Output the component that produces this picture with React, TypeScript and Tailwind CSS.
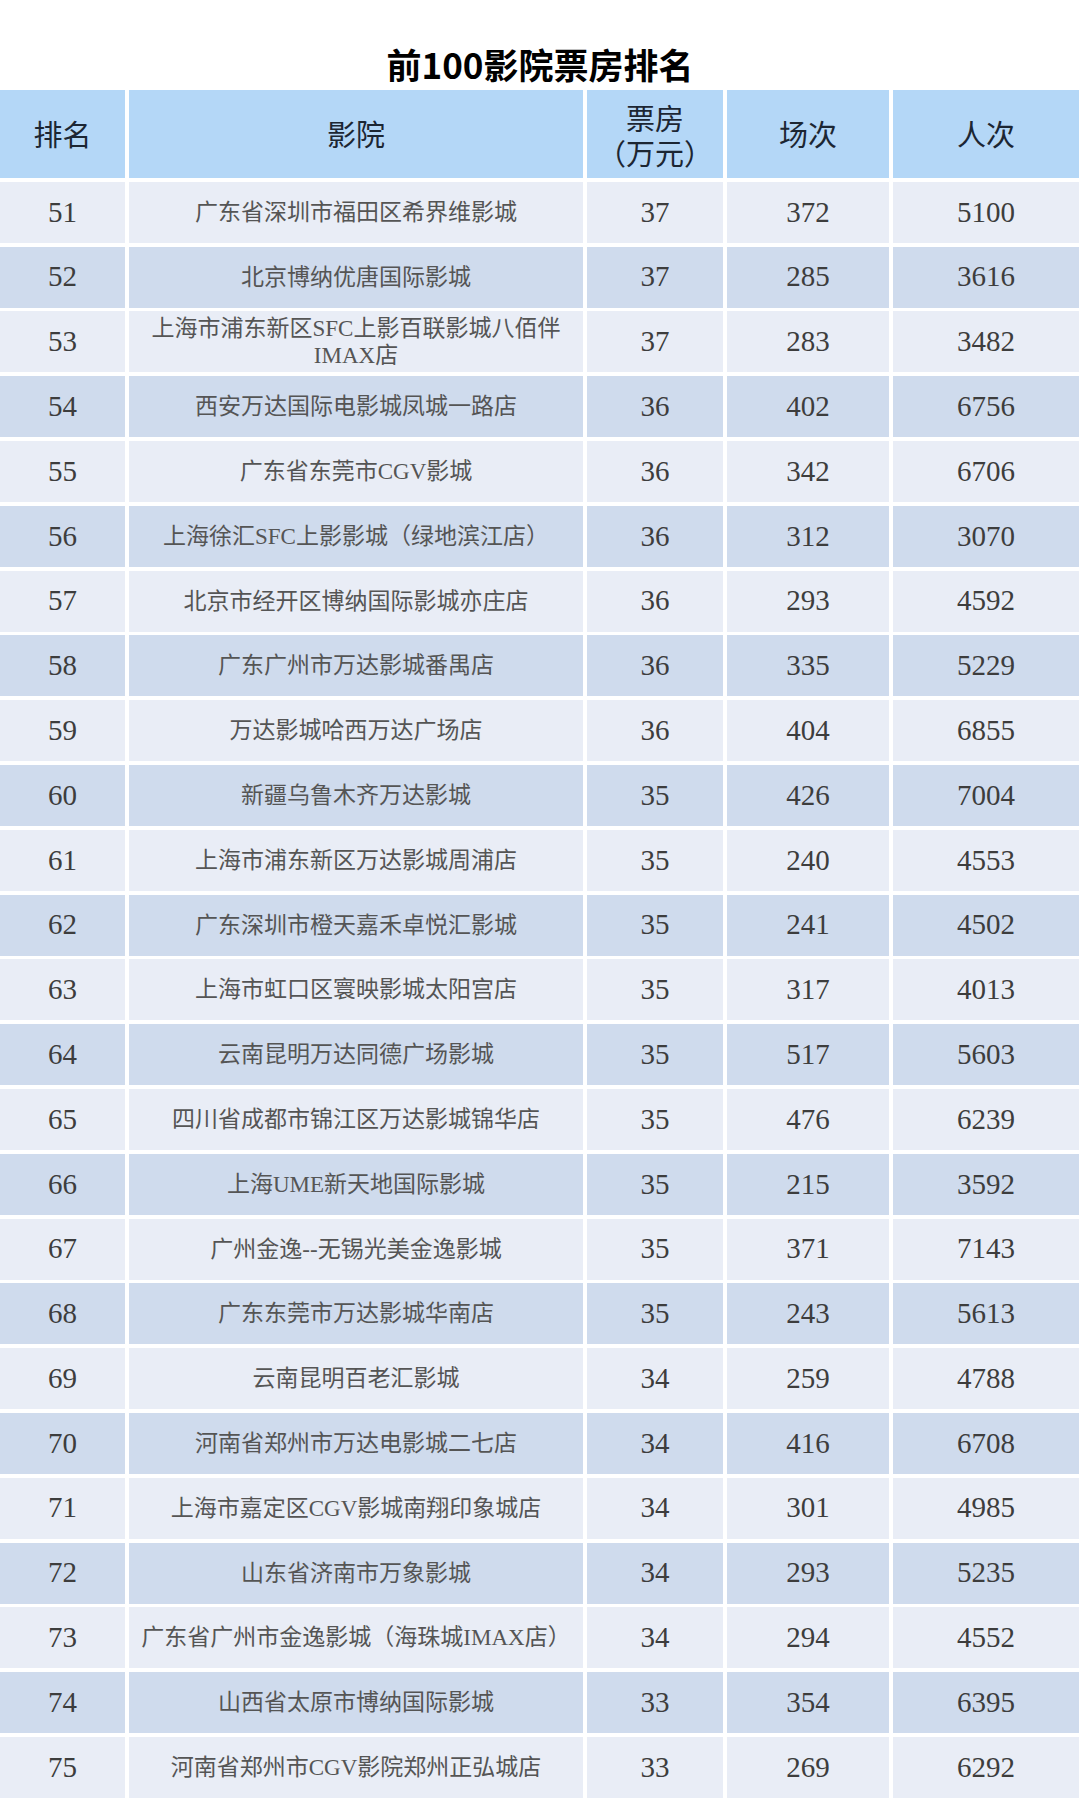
import React from 'react';

type Row = [number, string, number, number, number];

const rows: Row[] = [
  [51, '广东省深圳市福田区希界维影城', 37, 372, 5100],
  [52, '北京博纳优唐国际影城', 37, 285, 3616],
  [53, '上海市浦东新区SFC上影百联影城八佰伴|IMAX店', 37, 283, 3482],
  [54, '西安万达国际电影城凤城一路店', 36, 402, 6756],
  [55, '广东省东莞市CGV影城', 36, 342, 6706],
  [56, '上海徐汇SFC上影影城（绿地滨江店）', 36, 312, 3070],
  [57, '北京市经开区博纳国际影城亦庄店', 36, 293, 4592],
  [58, '广东广州市万达影城番禺店', 36, 335, 5229],
  [59, '万达影城哈西万达广场店', 36, 404, 6855],
  [60, '新疆乌鲁木齐万达影城', 35, 426, 7004],
  [61, '上海市浦东新区万达影城周浦店', 35, 240, 4553],
  [62, '广东深圳市橙天嘉禾卓悦汇影城', 35, 241, 4502],
  [63, '上海市虹口区寰映影城太阳宫店', 35, 317, 4013],
  [64, '云南昆明万达同德广场影城', 35, 517, 5603],
  [65, '四川省成都市锦江区万达影城锦华店', 35, 476, 6239],
  [66, '上海UME新天地国际影城', 35, 215, 3592],
  [67, '广州金逸--无锡光美金逸影城', 35, 371, 7143],
  [68, '广东东莞市万达影城华南店', 35, 243, 5613],
  [69, '云南昆明百老汇影城', 34, 259, 4788],
  [70, '河南省郑州市万达电影城二七店', 34, 416, 6708],
  [71, '上海市嘉定区CGV影城南翔印象城店', 34, 301, 4985],
  [72, '山东省济南市万象影城', 34, 293, 5235],
  [73, '广东省广州市金逸影城（海珠城IMAX店）', 34, 294, 4552],
  [74, '山西省太原市博纳国际影城', 33, 354, 6395],
  [75, '河南省郑州市CGV影院郑州正弘城店', 33, 269, 6292],
];

const cols = 'grid grid-cols-[125px_454px_136px_162px_186px] gap-x-[4px]';
const serif = "font-['Liberation_Serif','Noto_Sans_CJK_SC',serif]";

const App = () => {
  return (
    <div className="w-[1080px] h-[1800px] overflow-hidden bg-white">
      <div className="h-[90px] flex items-end justify-center pb-[6px]">
        <h1 className="font-['Noto_Sans_CJK_SC',sans-serif] font-bold text-[35px] leading-[40px] text-black">
          前100影院票房排名
        </h1>
      </div>

      <div className="flex flex-col gap-y-[3.8px]">
        <div className={`${cols} h-[88px] font-['Noto_Sans_CJK_SC',sans-serif] text-[29px] text-[#1c2633]`}>
          <div className="bg-[#b4d7f7] flex items-center justify-center">排名</div>
          <div className="bg-[#b4d7f7] flex items-center justify-center">影院</div>
          <div className="bg-[#b4d7f7] flex flex-col items-center justify-center leading-[32px] gap-y-[3px]">
            <span>票房</span>
            <span>（万元）</span>
          </div>
          <div className="bg-[#b4d7f7] flex items-center justify-center">场次</div>
          <div className="bg-[#b4d7f7] flex items-center justify-center">人次</div>
        </div>

        {rows.map(([rank, name, box, shows, people], i) => {
          const bg = i % 2 === 0 ? 'bg-[#e9edf6]' : 'bg-[#cfdbed]';
          const lines = name.split('|');
          return (
            <div key={rank} className={`${cols} h-[61px] ${serif} text-[#3d3d3d]`}>
              <div className={`${bg} flex items-center justify-center text-[29px]`}>{rank}</div>
              <div className={`${bg} flex flex-col items-center justify-center text-[23px] leading-[27px] text-[#555]`}>
                {lines.map((l) => (
                  <span key={l} className="whitespace-nowrap">{l}</span>
                ))}
              </div>
              <div className={`${bg} flex items-center justify-center text-[29px]`}>{box}</div>
              <div className={`${bg} flex items-center justify-center text-[29px]`}>{shows}</div>
              <div className={`${bg} flex items-center justify-center text-[29px]`}>{people}</div>
            </div>
          );
        })}
      </div>
    </div>
  );
};

export default App;
